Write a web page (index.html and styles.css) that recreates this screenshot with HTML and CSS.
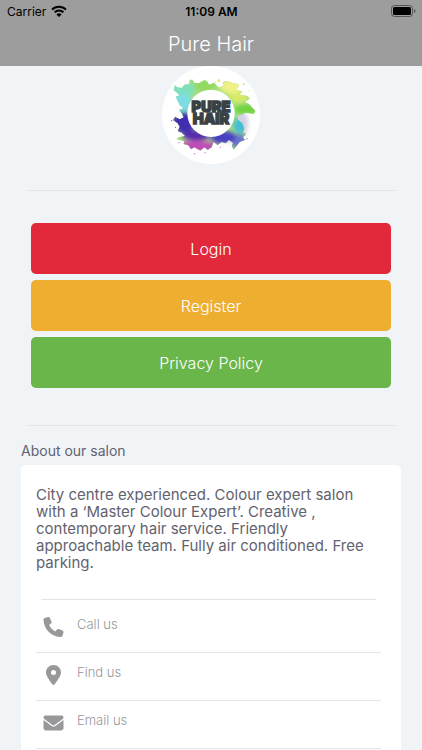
FILE: index.html
```html
<!DOCTYPE html>
<html lang="en">
<head>
    <meta charset="UTF-8">
    <meta name="viewport" content="width=device-width, initial-scale=1.0">
    <title>Pure Hair</title>
    <link rel="stylesheet" href="styles.css">
</head>
<body>
    <header class="header">
        <div class="status-bar">
            <div class="carrier">
                <span>Carrier</span>
                <svg width="16" height="12" viewBox="0 0 16 12" fill="none" stroke="#000" stroke-width="2">
                    <path d="M1 4.6a10 10 0 0 1 14 0"/>
                    <path d="M3.6 7.3a6.3 6.3 0 0 1 8.8 0"/>
                    <path d="M8 12 5.4 9.4a3.8 3.8 0 0 1 5.2 0z" fill="#000" stroke="none"/>
                </svg>
            </div>
            <span class="time">11:09 AM</span>
            <div class="battery">
                <svg width="25" height="12" viewBox="0 0 25 12">
                    <rect x="0.5" y="0.5" width="21" height="11" rx="3" fill="none" stroke="#555"/>
                    <rect x="2" y="2" width="18" height="8" rx="1.5"/>
                    <path d="M23 4v4q1.5-.5 1.5-2T23 4z" fill="#555"/>
                </svg>
            </div>
        </div>
        <h1 class="title">Pure Hair</h1>
    </header>

    <main class="content">
        <svg class="logo" viewBox="21 18 294 294" role="img" aria-label="Pure Hair">
            <defs>
                <clipPath id="splash">
                    <path d="M60 75L66 82L80 84L88 74L102 72L104 60L112 58L118 68L132 70L148 60L156 64L162 74L178 68L190 82L206 78L202 68L212 62L236 70L250 72L250 82L243 90L262 94L254 104L278 108L284 116L270 126L282 132L302 154L296 162L272 158L258 164L246 168L250 180L262 190L268 206L264 216L274 222L264 232L270 240L254 246L242 262L236 270L230 258L234 248L222 240L212 250L200 246L188 256L176 246L170 262L158 270L148 262L136 272L118 262L108 268L100 256L86 252L88 244L64 238L70 232L90 228L80 218L68 214L74 200L68 190L54 180L60 170L74 178L86 172L80 160L72 150L86 144L74 136L68 122L62 110L74 106L66 98L56 90z"/>
                </clipPath>
                <filter id="soft" x="-50%" y="-50%" width="200%" height="200%">
                    <feGaussianBlur stdDeviation="7"/>
                </filter>
            </defs>
            <circle cx="168" cy="165" r="147" fill="#fff"/>
            <circle cx="222" cy="190" r="58" fill="#a6a3c8" opacity="0.5" filter="url(#soft)"/>
            <g clip-path="url(#splash)">
                <path fill="#a5df80" d="M20 20h300v290H20z"/>
                <g filter="url(#soft)">
                    <ellipse cx="82" cy="88" rx="38" ry="24" fill="#7fe0bb"/>
                    <ellipse cx="82" cy="128" rx="28" ry="28" fill="#7cdde8"/>
                    <ellipse cx="150" cy="76" rx="34" ry="18" fill="#92d95f"/>
                    <ellipse cx="228" cy="80" rx="34" ry="22" fill="#f0f285"/>
                    <ellipse cx="250" cy="112" rx="30" ry="16" fill="#d9ea67"/>
                    <ellipse cx="272" cy="148" rx="34" ry="14" fill="#70d23e"/>
                    <ellipse cx="256" cy="196" rx="22" ry="24" fill="#45bdd6"/>
                    <ellipse cx="252" cy="244" rx="26" ry="22" fill="#6b74cc"/>
                    <ellipse cx="205" cy="232" rx="38" ry="20" fill="#463fc3"/>
                    <ellipse cx="86" cy="188" rx="34" ry="32" fill="#402fae"/>
                    <ellipse cx="124" cy="226" rx="42" ry="16" fill="#5429ae"/>
                    <ellipse cx="125" cy="260" rx="62" ry="18" fill="#c04cba"/>
                </g>
            </g>
            <g fill="#c573c6">
                <circle cx="119" cy="281" r="2"/><circle cx="150" cy="278" r="2"/><circle cx="72" cy="248" r="2"/><circle cx="196" cy="262" r="2"/>
            </g>
            <g fill="#7268c0">
                <circle cx="61" cy="202" r="2"/><circle cx="50" cy="182" r="2"/><circle cx="276" cy="236" r="2"/>
            </g>
            <g fill="#dbe86e">
                <circle cx="192" cy="62" r="4"/><circle cx="182" cy="66" r="2"/><circle cx="266" cy="73" r="3"/><circle cx="283" cy="92" r="2"/>
            </g>
            <circle cx="168" cy="160" r="71" fill="#fff"/>
            <text class="logo-text" text-anchor="middle"><tspan x="168" y="157">PURE</tspan><tspan x="168" y="192">HAIR</tspan></text>
        </svg>

        <hr class="divider">

        <div class="buttons">
            <button type="button" class="btn login">Login</button>
            <button type="button" class="btn register">Register</button>
            <button type="button" class="btn privacy">Privacy Policy</button>
        </div>

        <hr class="divider">

        <h2 class="section-title">About our salon</h2>
        <section class="card">
            <p class="about">City centre experienced. Colour expert salon with a ‘Master Colour Expert’. Creative , contemporary hair service. Friendly approachable team. Fully air conditioned. Free parking.</p>
            <hr class="card-divider">
            <nav class="links">
                <a class="row" href="#call">
                    <svg class="icon" viewBox="0 0 512 512"><path d="M164.900 24.600c-7.700-18.600-28-28.500-47.400-23.200l-88 24C12.100 30.200 0 46 0 64c0 247.400 200.600 448 448 448 18 0 33.800-12.100 38.600-29.500l24-88c5.300-19.400-4.600-39.700-23.200-47.400l-96-40c-16.300-6.800-35.200-2.100-46.300 11.600L304.700 368C234.300 334.700 177.300 277.700 144 207.300L193.300 167c13.700-11.200 18.400-30 11.600-46.300l-40-96z"/></svg>
                    <span>Call us</span>
                </a>
                <a class="row" href="#find">
                    <svg class="icon" viewBox="0 0 384 512"><path d="M215.700 499.200C267 435 384 279.400 384 192 384 86 298 0 192 0S0 86 0 192c0 87.400 117 243 168.300 307.200 12.300 15.300 35.100 15.300 47.400 0zM192 128a64 64 0 1 1 0 128 64 64 0 0 1 0-128z"/></svg>
                    <span>Find us</span>
                </a>
                <a class="row" href="#email">
                    <svg class="icon" viewBox="0 0 512 512"><path d="M48 64C21.500 64 0 85.500 0 112c0 15.100 7.100 29.300 19.200 38.400L236.800 313.600c11.400 8.500 27 8.500 38.400 0L492.800 150.400c12.100-9.100 19.200-23.300 19.200-38.400 0-26.500-21.500-48-48-48H48zM0 176v208c0 35.300 28.700 64 64 64h384c35.300 0 64-28.700 64-64V176L294.400 339.200c-22.800 17.100-54 17.100-76.800 0L0 176z"/></svg>
                    <span>Email us</span>
                </a>
            </nav>
        </section>
    </main>
</body>
</html>
```
FILE: styles.css
```css
* {
    margin: 0;
    padding: 0;
    box-sizing: border-box;
}
body {
    height: 100vh;
    overflow: hidden;
    background: #f0f4f7;
    color: #62626f;
    font-family: Inter, sans-serif;
}
.header {
    background: #9d9d9d;
}
.status-bar {
    display: grid;
    grid-template-columns: 1fr auto 1fr;
    align-items: center;
    height: 22px;
    padding: 0 6px 0 7px;
    color: #000;
    font-size: 12px;
}
.carrier {
    display: flex;
    align-items: center;
    gap: 5px;
}
.time {
    font-weight: 600;
}
.battery {
    display: flex;
    justify-content: flex-end;
}
.title {
    color: #fff;
    font-size: 20px;
    font-weight: 300;
    line-height: 44px;
    text-align: center;
}
.content {
    padding: 0 21px;
}
.logo {
    display: block;
    width: 98px;
    height: 98px;
    margin: 0 auto;
}
.logo-text {
    fill: #3a4145;
    stroke: #3a4145;
    stroke-width: 4px;
    font-size: 44px;
    font-weight: 900;
}
.divider {
    height: 1px;
    margin: 26px 5px 32px;
    border: none;
    background: #e3e7ea;
}
.buttons {
    display: flex;
    flex-direction: column;
    gap: 6px;
    margin: 0 10px 37px;
}
.btn {
    width: 100%;
    height: 51px;
    border: none;
    border-radius: 5px;
    color: #fff;
    font-family: inherit;
    font-size: 16px;
    font-weight: 300;
    cursor: pointer;
}
.login {
    background: #e2293b;
}
.register {
    background: #eeae30;
}
.privacy {
    background: #6bb64a;
}
.buttons + .divider {
    margin-bottom: 16px;
}
.section-title {
    font-size: 14px;
    font-weight: 400;
    line-height: 18px;
}
.card {
    margin-top: 5px;
    padding: 21px 20px 20px 15px;
    border-radius: 5px;
    background: #fff;
}
.about {
    font-size: 15px;
    line-height: 17px;
}
.card-divider {
    height: 1px;
    margin: 28px 5px 5px;
    border: none;
    background: #e4e4e6;
}
.row {
    display: flex;
    align-items: center;
    gap: 13px;
    height: 48px;
    padding: 0 0 4px 7px;
    border-bottom: 1px solid #e4e4e6;
    color: #98989b;
    font-size: 13px;
    font-weight: 300;
    text-decoration: none;
}
.row span {
    padding-bottom: 6px;
}
.icon {
    width: 21px;
    height: 20px;
    fill: #98989b;
}
```
